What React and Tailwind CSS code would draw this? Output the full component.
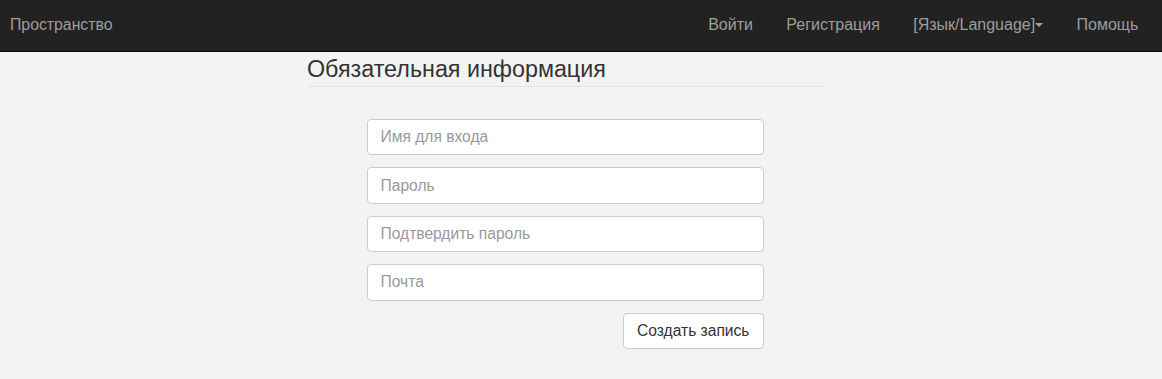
export default function App() {
  const fields = ['Имя для входа', 'Пароль', 'Подтвердить пароль', 'Почта'];
  const links = ['Войти', 'Регистрация'];

  return (
    <div className="min-h-[379px] bg-[#f3f3f3] font-['Liberation_Sans',Arial,sans-serif] text-[15.6px] text-[#333]">
      <nav className="flex h-[52px] items-center justify-between border-b border-[#080808] bg-[#222] pb-[1px] pl-[10px] pr-[7px] text-[16px] text-[#9d9d9d]">
        <a className="text-[15.8px] leading-5">Пространство</a>
        <ul className="flex items-center">
          {links.map((l) => (
            <li key={l} className="px-[16.7px] leading-5">{l}</li>
          ))}
          <li className="flex items-center px-[16.7px] leading-5">
            [Язык/Language]
            <span className="h-0 w-0 border-x-[4px] border-t-[4px] border-x-transparent border-t-[#9d9d9d]" />
          </li>
          <li className="px-[16.7px] leading-5">Помощь</li>
        </ul>
      </nav>

      <div className="mx-auto w-[516px] translate-x-[-16px]">
        <h3 className="mt-[4px] border-b border-[#e3e3e3] pb-[4px] text-[23.3px] font-normal leading-[26px] text-[#333]">
          Обязательная информация
        </h3>
        <form className="mx-auto mt-[32px] flex w-[397px] flex-col gap-[12px]">
          {fields.map((f) => (
            <input
              key={f}
              type={f.includes('ароль') ? 'password' : 'text'}
              placeholder={f}
              className="h-[36.4px] rounded-[4px] border border-[#ccc] bg-white px-[13px] text-[15.6px] text-[#555] placeholder:text-[#999]"
            />
          ))}
          <div className="flex justify-end">
            <button type="button" className="h-[36px] rounded-[4px] border border-[#ccc] bg-white px-[13px] text-[15.6px] text-[#333]">
              Создать запись
            </button>
          </div>
        </form>
      </div>
    </div>
  );
}
